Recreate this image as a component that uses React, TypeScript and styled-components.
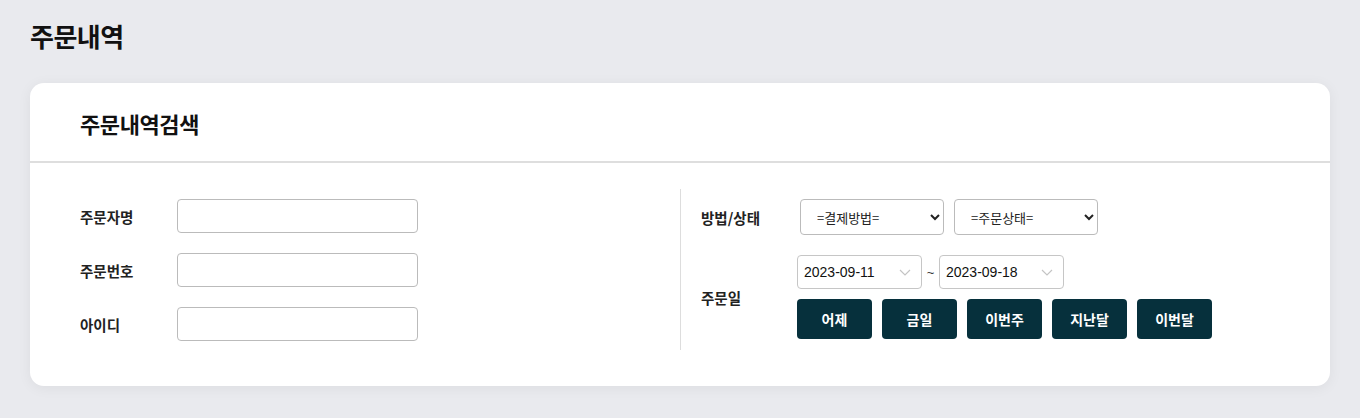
import React from "react";
import styled, { createGlobalStyle } from "styled-components";

const Global = createGlobalStyle`
  html, body { margin: 0; padding: 0; }
  body {
    background: #e9eaee;
    font-family: "Noto Sans CJK KR", "Noto Sans", sans-serif;
    color: #111;
  }
  * { box-sizing: border-box; }
`;

const Page = styled.div`
  padding: 18px 30px 30px 30px;
`;

const Title = styled.h1`
  margin: 0 0 29px 0;
  font-size: 26px;
  line-height: 36px;
  font-weight: 700;
  color: #111;
  letter-spacing: -0.5px;
`;

const Card = styled.section`
  width: 1300px;
  background: #fff;
  border-radius: 14px;
  box-shadow: 0 2px 14px rgba(0, 0, 0, 0.06);
`;

const CardHeader = styled.div`
  height: 80px;
  display: flex;
  align-items: center;
  padding: 2px 0 0 50px;
  border-bottom: 2px solid #dedede;
`;

const CardTitle = styled.h2`
  margin: 0;
  font-size: 22px;
  font-weight: 700;
  color: #111;
  letter-spacing: -0.4px;
`;

const CardBody = styled.div`
  display: grid;
  grid-template-columns: 650px 1fr;
  padding: 26px 0 36px 0;
`;

const LeftCol = styled.div`
  display: flex;
  flex-direction: column;
  gap: 20px;
  padding: 10px 0 0 50px;
`;

const RightCol = styled.div`
  border-left: 1px solid #dddddd;
  padding: 10px 0 11px 20px;
  display: flex;
  flex-direction: column;
  gap: 20px;
`;

const Row = styled.div<{ $labelWidth: number }>`
  display: grid;
  grid-template-columns: ${(p) => p.$labelWidth}px auto;
  align-items: center;
  justify-content: start;
`;

const Label = styled.label`
  font-size: 14.5px;
  font-weight: 600;
  color: #222;
`;

const TextInput = styled.input`
  width: 241px;
  height: 34px;
  border: 1px solid #bbbbbb;
  border-radius: 4px;
  background: #fff;
  padding: 0 10px;
  font-size: 14px;
`;

const SelectGroup = styled.div`
  display: flex;
  gap: 10px;
`;

const Select = styled.select`
  width: 144px;
  height: 36px;
  border: 1px solid #bbbbbb;
  border-radius: 4px;
  background: #fff;
  padding: 0 8px 0 12px;
  font-size: 13px;
  font-family: "Noto Sans CJK KR", sans-serif;
  color: #222;
`;

const DateBlock = styled.div`
  display: flex;
  flex-direction: column;
  gap: 10px;
`;

const DateRow = styled.div`
  display: flex;
  align-items: center;
`;

const DateBox = styled.div`
  width: 125px;
  height: 34px;
  border: 1px solid #c6c6c6;
  border-radius: 4px;
  display: flex;
  align-items: center;
  justify-content: space-between;
  padding: 0 9px 0 6px;
  font-family: "Liberation Sans", Arial, sans-serif;
  font-size: 14px;
  color: #111;
`;

const Tilde = styled.span`
  width: 17px;
  text-align: center;
  font-size: 13px;
  color: #333;
  font-family: "Liberation Sans", Arial, sans-serif;
`;

const ButtonRow = styled.div`
  display: flex;
  gap: 10px;
`;

const QuickButton = styled.button`
  width: 75px;
  height: 40px;
  border: none;
  border-radius: 4px;
  background: #06303c;
  color: #fff;
  font-size: 14px;
  font-weight: 700;
  font-family: "Noto Sans CJK KR", sans-serif;
  cursor: pointer;
`;

const Chevron = () => (
  <svg width="14" height="14" viewBox="0 0 14 14" fill="none">
    <path d="M2 5l5 5 5-5" stroke="#c4c4c4" strokeWidth="1.2" />
  </svg>
);

export default function App() {
  return (
    <>
      <Global />
      <Page>
        <Title>주문내역</Title>
        <Card>
          <CardHeader>
            <CardTitle>주문내역검색</CardTitle>
          </CardHeader>
          <CardBody>
            <LeftCol>
              {["주문자명", "주문번호", "아이디"].map((l) => (
                <Row key={l} $labelWidth={97}>
                  <Label>{l}</Label>
                  <TextInput type="text" />
                </Row>
              ))}
            </LeftCol>
            <RightCol>
              <Row $labelWidth={99}>
                <Label>방법/상태</Label>
                <SelectGroup>
                  <Select defaultValue="">
                    <option value="">=결제방법=</option>
                  </Select>
                  <Select defaultValue="">
                    <option value="">=주문상태=</option>
                  </Select>
                </SelectGroup>
              </Row>
              <Row $labelWidth={96}>
                <Label>주문일</Label>
                <DateBlock>
                  <DateRow>
                    <DateBox>
                      2023-09-11
                      <Chevron />
                    </DateBox>
                    <Tilde>~</Tilde>
                    <DateBox>
                      2023-09-18
                      <Chevron />
                    </DateBox>
                  </DateRow>
                  <ButtonRow>
                    {["어제", "금일", "이번주", "지난달", "이번달"].map((b) => (
                      <QuickButton key={b}>{b}</QuickButton>
                    ))}
                  </ButtonRow>
                </DateBlock>
              </Row>
            </RightCol>
          </CardBody>
        </Card>
      </Page>
    </>
  );
}
